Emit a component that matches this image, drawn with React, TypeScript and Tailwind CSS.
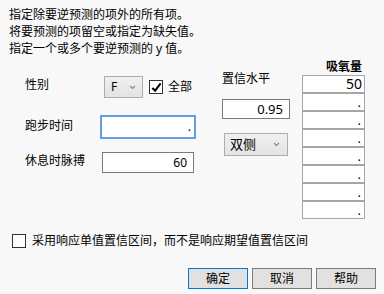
const Chevron = () => (
  <svg viewBox="0 0 7 5" className="w-[7px] h-[5px]" fill="none" stroke="#8a8a8a" strokeWidth="1.2">
    <path d="M1 1l2.5 2.5L6 1" />
  </svg>
);

const Cell = ({ value }: { value: string }) => (
  <div className="h-[18px] border border-[#a6a6a6] bg-white flex items-center justify-end pr-[2px]">
    {value === "." ? (
      <span className="text-[13px] leading-[13px] pr-[1px]">.</span>
    ) : (
      <span className="text-[14px] leading-[14px]">{value}</span>
    )}
  </div>
);

export default function App() {
  const rows = ["50", ".", ".", ".", ".", ".", ".", "."];
  return (
    <div className="w-[384px] h-[294px] overflow-hidden bg-[#f8f8f8] text-black text-[12px] font-['Noto_Sans','Noto_Sans_CJK_SC',sans-serif]">
      <div className="pl-[9px] pt-[6px] leading-[17px] h-[60px]">
        <p>指定除要逆预测的项外的所有项。</p>
        <p>将要预测的项留空或指定为缺失值。</p>
        <p>指定一个或多个要逆预测的 y 值。</p>
      </div>

      <div className="flex items-start">
        {/* left column */}
        <div className="ml-[25px] w-[171px] pt-[16px]">
          <div className="flex items-center h-[22px]">
            <span className="w-[79px] mb-[5px] leading-[17px]">性别</span>
            <div className="w-[39px] h-[22px] border border-[#adadad] bg-gradient-to-b from-[#f0f0f0] to-[#e3e3e3] flex items-center pl-[6px] pr-[6px] justify-between">
              <span className="leading-[14px]">F</span>
              <Chevron />
            </div>
            <div className="ml-[6px] w-[14px] h-[14px] border border-[#333] bg-white flex items-center justify-center">
              <svg viewBox="0 0 12 12" className="w-[11px] h-[11px]" fill="none" stroke="#000" strokeWidth="2.2">
                <path d="M1.5 6.5l3 3 6-8" />
              </svg>
            </div>
            <span className="ml-[5px] mb-[1px] leading-[17px]">全部</span>
          </div>

          <div className="flex items-center h-[24px] mt-[17px]">
            <span className="w-[75px] mb-[4px] leading-[17px]">跑步时间</span>
            <div className="w-[96px] h-[24px] border-2 border-[#62a0e6] bg-white flex items-center justify-end pr-[3px]">
              <span className="leading-[14px]">.</span>
            </div>
          </div>

          <div className="flex items-center h-[21px] mt-[13px]">
            <span className="w-[77px] mb-[5px] leading-[17px]">休息时脉搏</span>
            <div className="w-[92px] h-[21px] border border-[#7a7a7a] bg-white flex items-center justify-end pr-[6px]">
              <span className="text-[12px] leading-[14px]">60</span>
            </div>
          </div>
        </div>

        {/* middle column */}
        <div className="ml-[26px] w-[68px] pt-[10px]">
          <p className="leading-[17px]">置信水平</p>
          <div className="mt-[12px] h-[20px] border border-[#7a7a7a] bg-white flex items-center justify-end pr-[6px]">
            <span className="text-[13px] leading-[15px]">0.95</span>
          </div>
          <div className="mt-[14px] ml-[2px] w-[64px] h-[23px] border border-[#adadad] bg-gradient-to-b from-[#f0f0f0] to-[#e3e3e3] flex items-center justify-between pl-[5px] pr-[7px]">
            <span className="text-[13px] leading-[15px]">双侧</span>
            <Chevron />
          </div>
        </div>

        {/* response column */}
        <div className="ml-[12px] w-[63px]">
          <p className="h-[15px] leading-[14px] text-right pr-[3px] font-bold">吸氧量</p>
          {rows.map((v, i) => (
            <Cell key={i} value={v} />
          ))}
        </div>
      </div>

      <div className="mt-[15px] pl-[12px] flex items-center h-[14px]">
        <div className="w-[14px] h-[14px] border border-[#333] bg-white" />
        <span className="ml-[6px] leading-[14px]">采用响应单值置信区间，而不是响应期望值置信区间</span>
      </div>

      <div className="mt-[20px] flex justify-end gap-[4px] pr-[8px]">
        <button className="w-[60px] h-[21px] border border-[#0078d7] bg-[#e1e1e1] leading-[17px]">确定</button>
        <button className="w-[60px] h-[21px] border border-[#7a7a7a] bg-[#e1e1e1] leading-[17px]">取消</button>
        <button className="w-[60px] h-[21px] border border-[#7a7a7a] bg-[#e1e1e1] leading-[17px]">帮助</button>
      </div>
    </div>
  );
}
